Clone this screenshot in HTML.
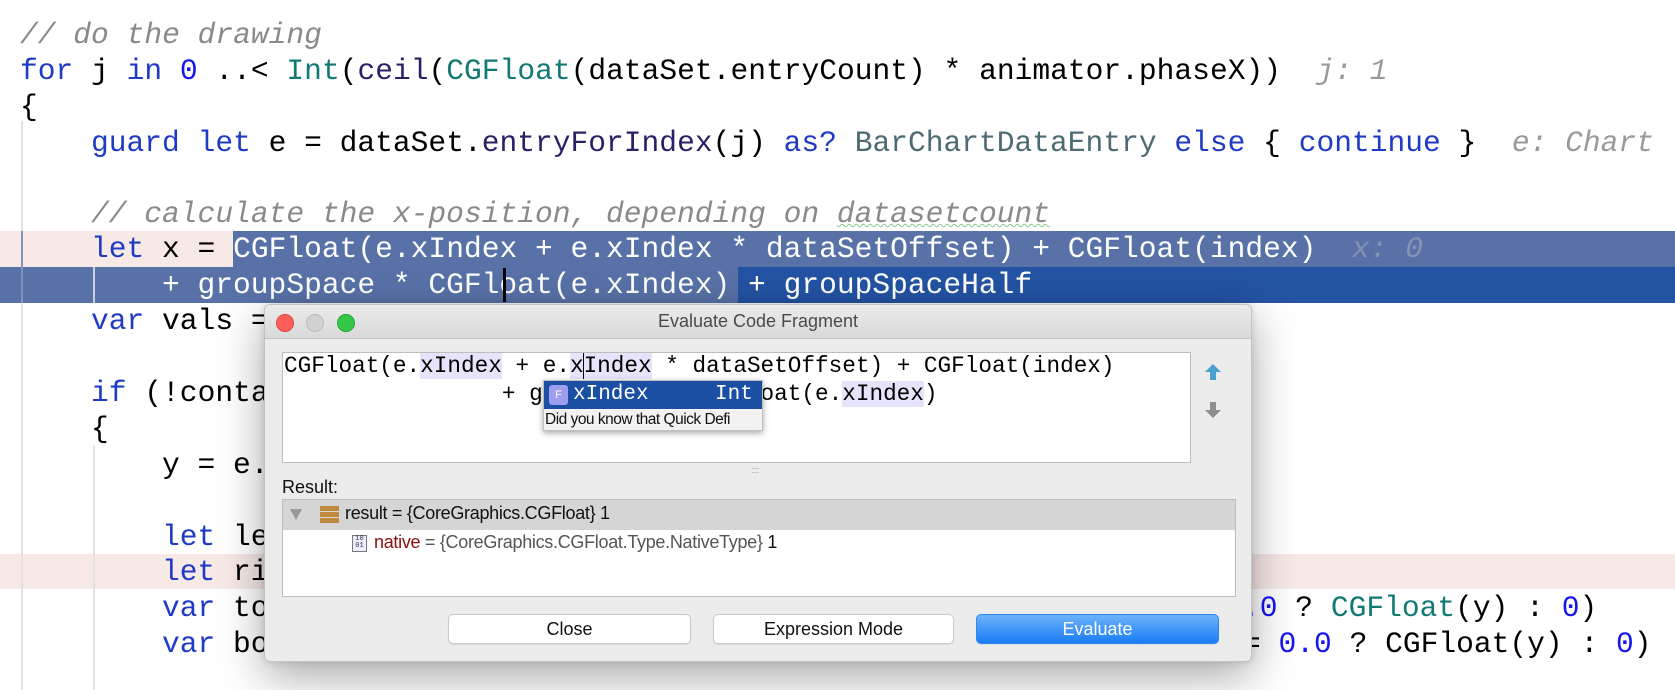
<!DOCTYPE html>
<html><head><meta charset="utf-8">
<style>
html,body{margin:0;padding:0;}
body{width:1675px;height:690px;position:relative;overflow:hidden;background:#fff;font-family:"Liberation Mono",monospace;}
.r{position:absolute;left:0;height:36px;line-height:36px;font-size:29.6px;white-space:pre;color:#000;}
.k{color:#1f3bc6}.n{color:#1515f0}.t{color:#127a75}.m{color:#2b1f66}.c{color:#8a8a8a;font-style:italic}.h{color:#9a9a9a;font-style:italic}.g{color:#4d6b73}
.bg{position:absolute;}
.guide{position:absolute;width:2px;background:#e2e2e2;}
.ui{font-family:"Liberation Sans",sans-serif;}
.dc{position:absolute;font-size:22.7px;white-space:pre;line-height:26px;color:#000;font-family:"Liberation Mono",monospace;}
.hl{background:#e6e4fb}
.btn{position:absolute;top:614px;height:30px;border-radius:5px;background:#fff;border:1px solid #c9c9c9;box-sizing:border-box;font-size:18px;line-height:28px;text-align:center;color:#111;box-shadow:0 1px 1px rgba(0,0,0,.08);}
</style></head><body>

<div class="bg" style="left:0;top:231px;width:233px;height:36px;background:#f6e9e6"></div>
<div class="bg" style="left:233px;top:231px;width:1442px;height:36px;background:#5872a8"></div>
<div class="bg" style="left:0;top:267px;width:738px;height:36px;background:#5872a8"></div>
<div class="bg" style="left:738px;top:267px;width:937px;height:36px;background:#2353a3"></div>
<div class="bg" style="left:0;top:554px;width:1675px;height:35px;background:#f6e9e6"></div>

<div class="guide" style="left:21px;top:121px;height:569px"></div>
<div class="guide" style="left:21px;top:231px;height:72px;background:#7e92bd"></div>
<div class="guide" style="left:93px;top:267px;height:36px;background:#c8d0e4"></div>
<div class="guide" style="left:93px;top:445px;height:245px"></div>

<div class="r" style="top:17px;left:20px"><span class="c">// do the drawing</span></div>
<div class="r" style="top:53px;left:20px"><span class="k">for</span> j <span class="k">in</span> <span class="n">0</span> ..&lt; <span class="t">Int</span>(<span class="m">ceil</span>(<span class="t">CGFloat</span>(dataSet.entryCount) * animator.phaseX))  <span class="h">j: 1</span></div>
<div class="r" style="top:89px;left:20px">{</div>
<div class="r" style="top:125px;left:91px"><span class="k">guard</span> <span class="k">let</span> e = dataSet.<span class="m">entryForIndex</span>(j) <span class="k">as?</span> <span class="g">BarChartDataEntry</span> <span class="k">else</span> { <span class="k">continue</span> }  <span class="h">e: Chart</span></div>
<div class="r" style="top:196px;left:91px"><span class="c">// calculate the x-position, depending on <span style="text-decoration:underline wavy #8bc58b;text-decoration-thickness:1px">datasetcount</span></span></div>
<div class="r" style="top:231px;left:91px"><span class="k">let</span> x = <span style="color:#fff">CGFloat(e.xIndex + e.xIndex * dataSetOffset) + CGFloat(index)</span>  <span style="color:#8593b3;font-style:italic">x: 0</span></div>
<div class="r" style="top:267px;left:162px;color:#fff">+ groupSpace * CGFloat(e.xIndex) + groupSpaceHalf</div>
<div class="bg" style="left:503px;top:268px;width:3px;height:34px;background:#000"></div>
<div class="r" style="top:303px;left:91px"><span class="k">var</span> vals = </div>
<div class="r" style="top:375px;left:91px"><span class="k">if</span> (!contains</div>
<div class="r" style="top:411px;left:91px">{</div>
<div class="r" style="top:447px;left:162px">y = e.value</div>
<div class="r" style="top:519px;left:162px"><span class="k">let</span> left</div>
<div class="r" style="top:554px;left:162px"><span class="k">let</span> right</div>
<div class="r" style="top:590px;left:162px"><span class="k">var</span> top</div>
<div class="r" style="top:590px;left:1242px"><span class="n">.0</span> ? <span class="t">CGFloat</span>(y) : <span class="n">0</span>)</div>
<div class="r" style="top:626px;left:162px"><span class="k">var</span> bottom</div>
<div class="r" style="top:626px;left:1243px">= <span class="n">0.0</span> ? CGFloat(y) : <span class="n">0</span>)</div>

<div class="ui" style="position:absolute;left:264px;top:304px;width:988px;height:358px;background:#ececec;border-radius:6px;border:1px solid #c4c4c4;box-sizing:border-box;box-shadow:0 14px 45px rgba(0,0,0,.35),0 0 8px rgba(0,0,0,.12);overflow:hidden;">
  <div style="position:absolute;left:0;top:0;width:100%;height:33px;background:linear-gradient(#ebebeb,#d9d9d9);border-bottom:1px solid #c6c6c6;"></div>
  <div style="position:absolute;left:11px;top:9px;width:18px;height:18px;border-radius:50%;background:#fc5f57;border:1px solid #e0443e;box-sizing:border-box"></div>
  <div style="position:absolute;left:41px;top:9px;width:18px;height:18px;border-radius:50%;background:#d2d2d2;border:1px solid #bcbcbc;box-sizing:border-box"></div>
  <div style="position:absolute;left:72px;top:9px;width:18px;height:18px;border-radius:50%;background:#34c84a;border:1px solid #1fa631;box-sizing:border-box"></div>
  <div style="position:absolute;left:0;width:100%;top:6px;text-align:center;font-size:18px;color:#4a4a4a;">Evaluate Code Fragment</div>
  <div style="position:absolute;left:17px;top:47px;width:909px;height:111px;background:#fff;border:1px solid #bdbdbd;box-sizing:border-box"></div>
  <svg style="position:absolute;left:937px;top:57px" width="22" height="62" viewBox="0 0 22 62">
    <path d="M11 2 L19 10 L14 10 L14 18 L8 18 L8 10 L3 10 Z" fill="#4a9fd1"/>
    <path d="M8 40 L14 40 L14 48 L19 48 L11 56 L3 48 L8 48 Z" fill="#8e8e8e"/>
  </svg>
  <div style="position:absolute;left:486px;top:160px;font-size:9px;color:#aaa;letter-spacing:-1px">:::::</div>
  <div style="position:absolute;left:17px;top:172px;font-size:18px;color:#111">Result:</div>
  <div style="position:absolute;left:17px;top:194px;width:954px;height:98px;background:#fff;border:1px solid #bdbdbd;box-sizing:border-box">
    <div style="position:absolute;left:0;top:0;width:100%;height:30px;background:#d5d5d5"></div>
    <div style="position:absolute;left:7px;top:9px;width:0;height:0;border-left:6px solid transparent;border-right:6px solid transparent;border-top:11px solid #999"></div>
    <div style="position:absolute;left:37px;top:6px;width:19px;height:5px;background:#c08a3e"></div>
    <div style="position:absolute;left:37px;top:12px;width:19px;height:5px;background:#c08a3e"></div>
    <div style="position:absolute;left:37px;top:18px;width:19px;height:5px;background:#c08a3e"></div>
    <div style="position:absolute;left:62px;top:3px;font-size:18px;color:#111;letter-spacing:-0.3px">result = {CoreGraphics.CGFloat} 1</div>
    <div style="position:absolute;left:69px;top:35px;width:15px;height:17px;border:1px solid #777;box-sizing:border-box;background:#eef;font-size:7px;line-height:7px;text-align:center;color:#335;font-family:'Liberation Mono',monospace">10<br>01</div>
    <div style="position:absolute;left:91px;top:32px;font-size:18px;color:#555;letter-spacing:-0.3px"><span style="color:#8b0f0f">native</span> = {CoreGraphics.CGFloat.Type.NativeType} <span style="color:#111">1</span></div>
  </div>
</div>
<div class="dc" style="left:284px;top:353px"><span>CGFloat(e.</span><span class="hl">xIndex</span> + e.<span class="hl">x</span><span class="hl" style="border-left:1px solid #000;margin-left:-1px">Index</span> * dataSetOffset) + CGFloat(index)</div>
<div class="dc" style="left:284px;top:381px">                + groupSpace * CGFloat(e.<span class="hl">xIndex</span>)</div>
<div style="position:absolute;left:543px;top:380px;width:220px;height:51px;background:#f2f2f2;box-shadow:0 2px 6px rgba(0,0,0,.35);border:1px solid #c0c0c0;box-sizing:border-box;">
  <div style="position:absolute;left:0;top:0;width:100%;height:28px;background:#1a4fa3"></div>
  <div style="position:absolute;left:5px;top:4px;width:19px;height:20px;background:#9e9ef0;border-radius:3px;color:#fff;font-size:11px;line-height:20px;text-align:center;font-family:'Liberation Sans',sans-serif">F</div>
  <div style="position:absolute;left:29px;top:1px;font-family:'Liberation Mono',monospace;font-size:21px;color:#fff;line-height:26px">xIndex</div>
  <div style="position:absolute;left:171px;top:1px;font-family:'Liberation Mono',monospace;font-size:21px;color:#fff;line-height:26px">Int</div>
  <div class="ui" style="position:absolute;left:1px;top:30px;font-size:15.5px;color:#111;white-space:nowrap;letter-spacing:-0.5px">Did you know that Quick Defi</div>
</div>
<div class="btn ui" style="left:448px;width:243px">Close</div>
<div class="btn ui" style="left:713px;width:241px">Expression Mode</div>
<div class="btn ui" style="left:976px;width:243px;background:linear-gradient(#6cb3fa,#1a7cf5);border-color:#2f86ef;color:#fff">Evaluate</div>
</body></html>
